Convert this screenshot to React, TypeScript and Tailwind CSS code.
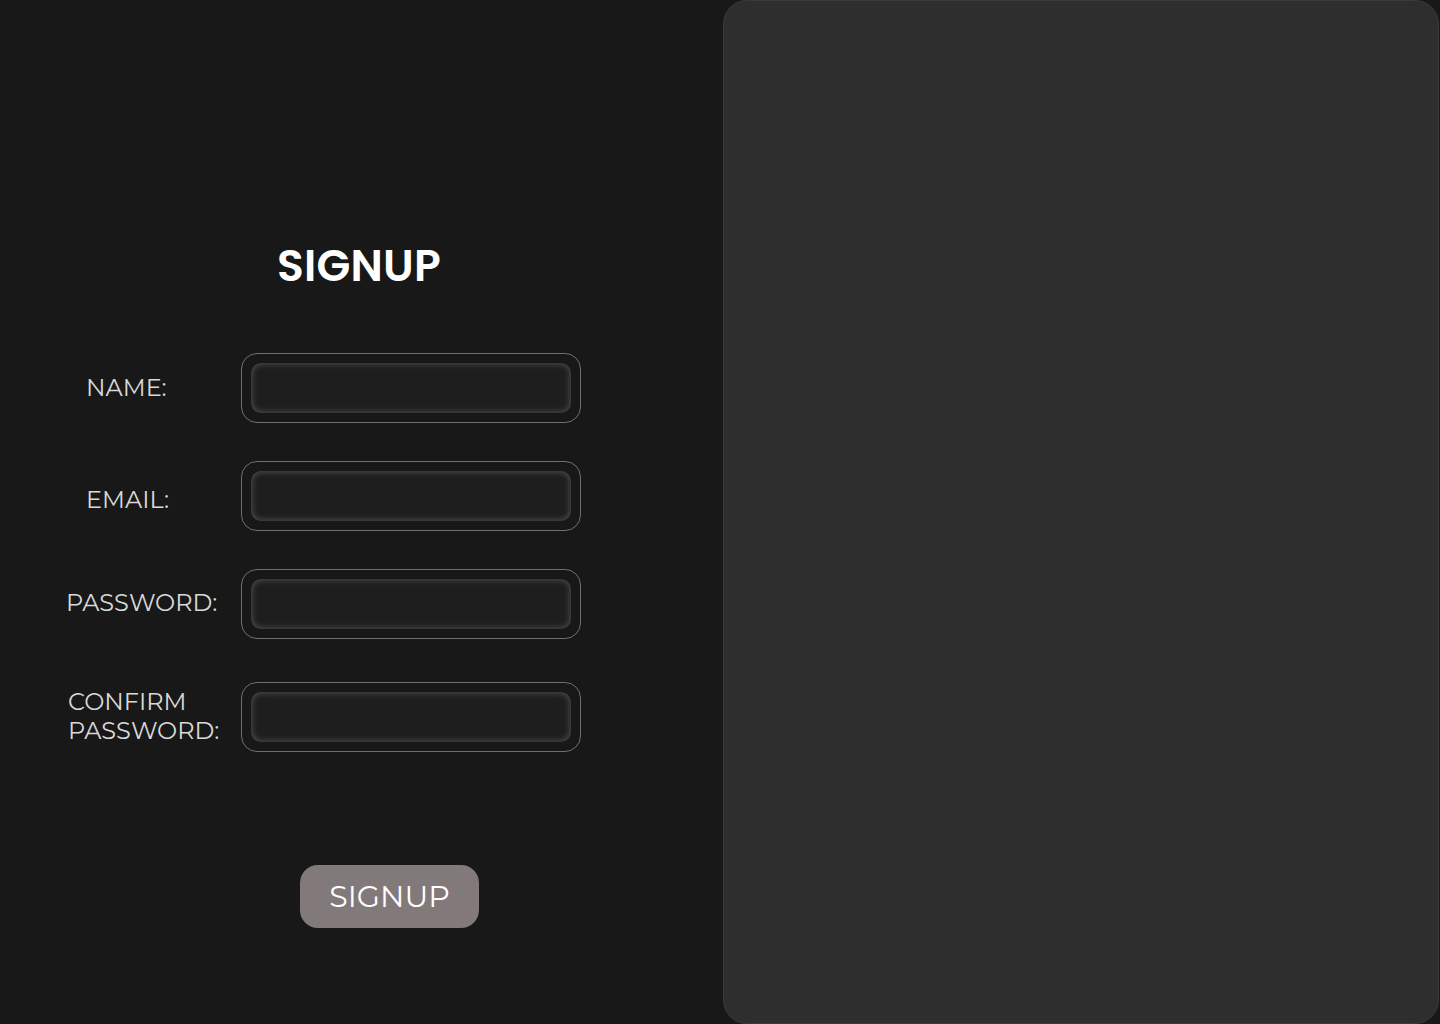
import type { ReactNode } from "react";

const labelFont = { fontFamily: "Montserrat, Inter, 'Open Sans', sans-serif" };

function Field({ label, pad, rowClass }: { label: ReactNode; pad: string; rowClass: string }) {
  return (
    <div className={`flex items-center ${rowClass}`}>
      <div className={`w-[241px] shrink-0 ${pad}`}>
        <span
          className="block text-[24px] leading-[29px] text-[#d9d9d9] font-normal"
          style={labelFont}
        >
          {label}
        </span>
      </div>
      <div className="w-[340px] h-[70px] rounded-[16px] border border-[#6f6f6f] p-[9px]">
        <input
          type="text"
          className="w-full h-full rounded-[10px] bg-[#1e1e1e] outline-none shadow-[inset_0_0_6px_1px_rgba(255,255,255,0.22)] text-white px-3"
        />
      </div>
    </div>
  );
}

export default function App() {
  return (
    <div className="w-[1440px] h-[1024px] bg-[#181818] flex overflow-hidden">
      <div className="w-[723px] shrink-0 flex flex-col">
        <h1
          className="mt-[240px] ml-[277px] text-[44px] leading-[52px] font-semibold text-white tracking-[0.005em]"
          style={{ fontFamily: "Poppins, Inter, 'Open Sans', sans-serif" }}
        >
          SIGNUP
        </h1>
        <div className="mt-[61px] flex flex-col">
          <Field label="NAME:" pad="pl-[86px] pb-[2px]" rowClass="" />
          <Field label="EMAIL:" pad="pl-[86px] pt-[7px]" rowClass="mt-[38px]" />
          <Field label="PASSWORD:" pad="pl-[66px] pb-[4px]" rowClass="mt-[38px]" />
          <Field
            label={
              <>
                CONFIRM
                <br />
                PASSWORD:
              </>
            }
            pad="pl-[68px] pb-[2px]"
            rowClass="mt-[43px]"
          />
        </div>
        <button
          className="mt-[113px] ml-[300px] w-[179px] h-[63px] rounded-[18px] bg-[#827a7a] text-white text-[30px]"
          style={labelFont}
        >
          SIGNUP
        </button>
      </div>
      <div className="flex-1 mr-[1px] bg-[#2e2e2e] rounded-[24px] border border-[#3a3a3a]" />
    </div>
  );
}
